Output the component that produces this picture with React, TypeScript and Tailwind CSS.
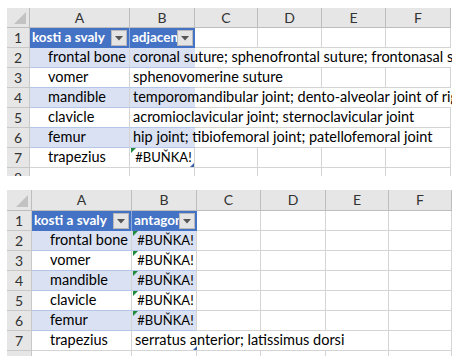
import React from "react";

type Row = { a: string; b: string; span?: number; err?: boolean };

type SheetProps = {
  rowNumW: number;
  widths: number[]; // A..F
  headerH: number;
  totalH: number;
  bHeader: string;
  rows: Row[];
};

const FONT = { fontFamily: "Lato, 'Liberation Sans', sans-serif" };
const LETTERS = ["A", "B", "C", "D", "E", "F"];

function FilterButton() {
  return (
    <div className="flex h-[16px] w-[16px] shrink-0 items-center justify-center border border-[#b9b9b9] bg-[#e4e4e4]">
      <svg width="8" height="5" viewBox="0 0 8 5">
        <path d="M0 0 L8 0 L4 4.5 Z" fill="#555" />
      </svg>
    </div>
  );
}

function ErrorMark() {
  return (
    <span className="absolute left-[1px] top-0 h-0 w-0 border-r-[5px] border-t-[5px] border-r-transparent border-t-[#1f8a3b]" />
  );
}

function Sheet({ rowNumW, widths, headerH, totalH, bHeader, rows }: SheetProps) {
  const allRows: (Row | null)[] = [...rows, null];
  return (
    <div
      className="w-[445px] overflow-hidden bg-white text-[14.5px] leading-none text-black"
      style={{ height: totalH, ...FONT }}
    >
      {/* column letters */}
      <div className="flex" style={{ height: headerH }}>
        <div
          className="relative shrink-0 border-b border-r border-[#bdbdbd] bg-[#e6e6e6]"
          style={{ width: rowNumW }}
        >
          <span className="absolute bottom-[3px] right-[3px] h-0 w-0 border-b-[12px] border-l-[12px] border-b-[#c2c2c2] border-l-transparent" />
        </div>
        {LETTERS.map((l, i) => (
          <div
            key={l}
            className="flex shrink-0 items-center justify-center border-b border-r border-[#bdbdbd] bg-[#e6e6e6] text-[14px] text-[#333]"
            style={{ width: widths[i] }}
          >
            {l}
          </div>
        ))}
      </div>

      {/* row 1: table header */}
      <div className="flex h-[20px]">
        <div
          className="flex shrink-0 items-center justify-center border-b border-r border-[#c8c8c8] bg-[#e6e6e6] text-[14px] text-[#333]"
          style={{ width: rowNumW }}
        >
          1
        </div>
        <div
          className="flex shrink-0 items-center border-r border-[#8ea9db] bg-[#4472c4] pl-[2px] pr-[2px] text-[13.5px] font-bold text-white"
          style={{ width: widths[0] }}
        >
          <span className="flex-1 overflow-hidden whitespace-nowrap">kosti a svaly</span>
          <FilterButton />
        </div>
        <div
          className="flex shrink-0 items-center bg-[#4472c4] pl-[2px] pr-[2px] text-[13.5px] font-bold text-white"
          style={{ width: widths[1] }}
        >
          <span className="flex-1 overflow-hidden whitespace-nowrap">{bHeader}</span>
          <FilterButton />
        </div>
        {widths.slice(2).map((w, i) => (
          <div key={i} className="shrink-0 border-b border-r border-[#d4d4d4]" style={{ width: w }} />
        ))}
      </div>

      {/* data rows */}
      {allRows.map((r, idx) => {
        const n = idx + 2;
        const band = r !== null && idx % 2 === 0;
        const last = idx === rows.length - 1;
        const span = r?.span ?? 1;
        const lineColor = r && !last ? "border-[#b4c6e7]" : "border-[#d4d4d4]";
        return (
          <div key={n} className="flex h-[20px]">
            <div
              className="flex shrink-0 items-center justify-center border-b border-r border-[#c8c8c8] bg-[#e6e6e6] text-[14px] text-[#333]"
              style={{ width: rowNumW }}
            >
              {n}
            </div>
            <div
              className={`flex shrink-0 items-center border-b border-r border-r-[#d4d4d4] pl-[18px] ${lineColor} ${
                band ? "bg-[#d9e1f2]" : "bg-white"
              }`}
              style={{ width: widths[0] }}
            >
              <span className="whitespace-nowrap">{r?.a}</span>
            </div>
            <div
              className={`relative z-10 flex shrink-0 items-center border-b ${lineColor} ${
                span > 1 ? "border-r-0" : "border-r border-r-[#d4d4d4]"
              } ${band ? "bg-[#d9e1f2]" : "bg-white"} ${r?.err ? "justify-center pl-[3px] text-[13px]" : "pl-[3px]"}`}
              style={{ width: widths[1] }}
            >
              {r?.err && <ErrorMark />}
              <span className="whitespace-nowrap">{r?.b}</span>
              {last && (
                <span className="absolute bottom-0 right-0 h-0 w-0 border-b-[4px] border-l-[4px] border-b-[#3a5fa8] border-l-transparent" />
              )}
            </div>
            {widths.slice(2).map((w, i) => {
              const covered = i + 2 < span;
              return (
                <div
                  key={i}
                  className={`shrink-0 border-b border-[#d4d4d4] ${covered ? "border-r-0" : "border-r"}`}
                  style={{ width: w }}
                />
              );
            })}
          </div>
        );
      })}
    </div>
  );
}

const TOP: Row[] = [
  { a: "frontal bone", b: "coronal suture; sphenofrontal suture; frontonasal suture", span: 6 },
  { a: "vomer", b: "sphenovomerine suture", span: 3 },
  { a: "mandible", b: "temporomandibular joint; dento-alveolar joint of right", span: 6 },
  { a: "clavicle", b: "acromioclavicular joint; sternoclavicular joint", span: 5 },
  { a: "femur", b: "hip joint; tibiofemoral joint; patellofemoral joint", span: 5 },
  { a: "trapezius", b: "#BUŇKA!", err: true },
];

const BOTTOM: Row[] = [
  { a: "frontal bone", b: "#BUŇKA!", err: true },
  { a: "vomer", b: "#BUŇKA!", err: true },
  { a: "mandible", b: "#BUŇKA!", err: true },
  { a: "clavicle", b: "#BUŇKA!", err: true },
  { a: "femur", b: "#BUŇKA!", err: true },
  { a: "trapezius", b: "serratus anterior; latissimus dorsi", span: 4 },
];

export default function App() {
  return (
    <div className="h-[363px] w-[459px] bg-white pl-[7px] pt-[8px]">
      <Sheet
        rowNumW={23}
        widths={[100, 65, 63, 64, 64, 65]}
        headerH={20}
        totalH={168}
        bHeader="adjacent"
        rows={TOP}
      />
      <div className="h-[14px]" />
      <Sheet
        rowNumW={25}
        widths={[100, 65, 64, 65, 63, 63]}
        headerH={21}
        totalH={166}
        bHeader="antagonist"
        rows={BOTTOM}
      />
    </div>
  );
}
